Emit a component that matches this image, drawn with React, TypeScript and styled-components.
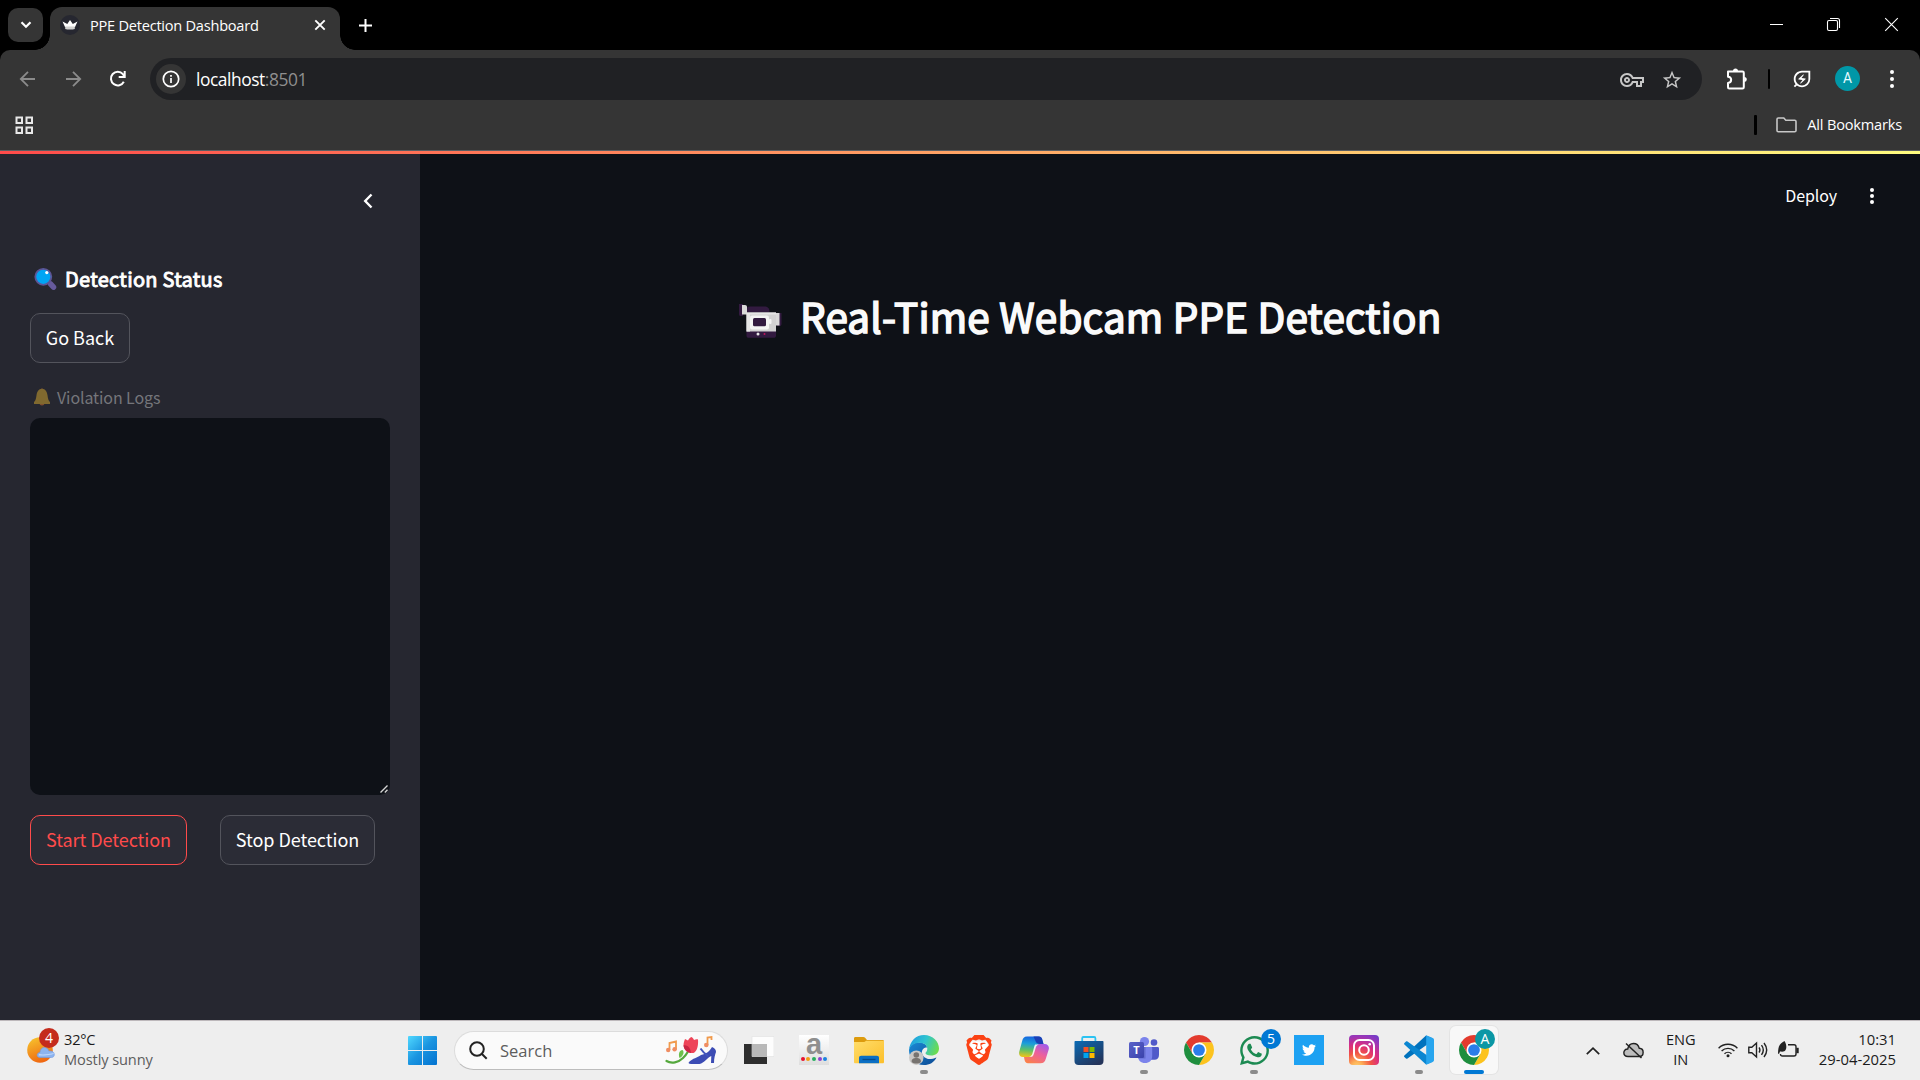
import React from "react";
import styled, { createGlobalStyle } from "styled-components";
import { MdOutlineVpnKey, MdOutlineStarBorder, MdOutlineEnergySavingsLeaf } from "react-icons/md";
import { FaTwitter, FaWhatsapp } from "react-icons/fa";
import { SiBrave } from "react-icons/si";

const segoe = `"Open Sans", "Noto Sans", sans-serif`;
const source = `"Noto Sans CJK SC", "Noto Sans", sans-serif`;

const GlobalStyle = createGlobalStyle`
  * { box-sizing: border-box; }
  html, body { margin: 0; background: #0e1117; overflow: hidden; }
  svg { display: block; flex: none; }
`;

const Desktop = styled.div`
  width: 1920px;
  height: 1080px;
  display: flex;
  flex-direction: column;
  overflow: hidden;
  font-family: ${segoe};
`;

const Label = styled.span<{ $size: number; $track?: number; $color?: string; $stroke?: number; $line?: number }>`
  font-size: ${p => p.$size}px;
  letter-spacing: ${p => p.$track ?? 0}px;
  color: ${p => p.$color ?? "#fff"};
  font-weight: 400;
  -webkit-text-stroke: ${p => p.$stroke ?? 0}px currentColor;
  line-height: ${p => p.$line ?? 20}px;
  white-space: nowrap;
`;

/* ---------- browser chrome ---------- */

const TabStrip = styled.header`
  height: 50px;
  background: #000;
  display: flex;
  padding: 7px 0 0 8px;
`;

const TabSearch = styled.button`
  width: 35px;
  height: 34px;
  margin: 1px 7px 0 0;
  padding: 0;
  border: 0;
  border-radius: 10px;
  background: #353535;
  display: grid;
  place-items: center;
`;

const Tab = styled.div`
  position: relative;
  width: 290px;
  height: 43px;
  border-radius: 12px 12px 0 0;
  background: #353535;
  display: flex;
  align-items: center;
  padding: 0 13px 7px 10px;
  &::before, &::after {
    content: "";
    position: absolute;
    bottom: 0;
    width: 15px;
    height: 15px;
  }
  &::before { left: -15px; background: radial-gradient(circle at 0 0, transparent 14.5px, #353535 15px); }
  &::after { right: -15px; background: radial-gradient(circle at 100% 0, transparent 14.5px, #353535 15px); }
`;

const TabTitle = styled.div`
  flex: 1;
  padding-left: 10px;
  display: flex;
`;

const NewTab = styled.div`
  margin: 11px 0 0 18px;
`;

const WindowControls = styled.div`
  margin-left: auto;
  padding: 10px 21px 0 0;
  display: flex;
  gap: 43px;
`;

const ToolbarBack = styled.div`
  background: #000;
`;

const Toolbar = styled.div`
  height: 56px;
  padding: 8px 0 0 18px;
  background: #353535;
  border-radius: 10px 10px 0 0;
  display: flex;
  align-items: flex-start;
`;

const NavButtons = styled.div`
  width: 132px;
  height: 42px;
  display: flex;
  align-items: center;
  gap: 25px;
`;

const Omnibox = styled.div`
  width: 1552px;
  height: 42px;
  border-radius: 21px;
  background: #202124;
  display: flex;
  align-items: center;
  padding: 0 19px 0 6px;
`;

const SiteInfo = styled.div`
  width: 30px;
  height: 30px;
  border-radius: 50%;
  background: #353535;
  display: grid;
  place-items: center;
  margin-right: 10px;
`;

const Spacer = styled.div`
  flex: 1;
`;

const OmniActions = styled.div`
  display: flex;
  align-items: center;
  gap: 17px;
  padding-top: 1px;
  color: #c7c7c7;
`;

const Extensions = styled.div`
  height: 41px;
  flex: 1;
  display: flex;
  align-items: center;
  padding-left: 24px;
  color: #fff;
`;

const Divider = styled.div<{ $width: number; $left: number; $right: number }>`
  width: ${p => p.$width}px;
  height: 20px;
  background: #000;
  border-radius: 1px;
  margin: 0 ${p => p.$right}px 0 ${p => p.$left}px;
`;

const Avatar = styled.div<{ $size: number }>`
  width: ${p => p.$size}px;
  height: ${p => p.$size}px;
  border-radius: 50%;
  background: #0097a7;
  color: #e6fbff;
  font: 400 ${p => p.$size * 0.55}px/1 Roboto, sans-serif;
  display: grid;
  place-items: center;
`;

const Bookmarks = styled.div`
  height: 45px;
  padding: 0 18px 6px 15px;
  background: #353535;
  border-bottom: 1px solid #5c5f63;
  display: flex;
  align-items: center;
`;

const BookmarkLabel = styled.div`
  display: flex;
  padding: 0 0 2px 10px;
`;

/* ---------- dashboard page ---------- */

const Rainbow = styled.div`
  height: 3px;
  background: linear-gradient(90deg, rgb(255, 75, 75), rgb(255, 253, 128));
`;

const Page = styled.div`
  height: 866px;
  display: flex;
  font-family: ${source};
`;

const Sidebar = styled.aside`
  width: 420px;
  background: #262730;
  padding: 37px 30px 0;
`;

const Collapse = styled.div`
  display: flex;
  justify-content: flex-end;
  padding-right: 12px;
  height: 73px;
`;

const Heading = styled.h3`
  margin: 0;
  height: 30px;
  padding-left: 4px;
  display: flex;
  align-items: center;
  gap: 8px;
`;

const Button = styled.button<{ $width: number; $hot?: boolean }>`
  width: ${p => p.$width}px;
  height: 50px;
  padding: 0 0 3px;
  border: 1px solid ${p => (p.$hot ? "#ff4b4b" : "#53545c")};
  border-radius: 10px;
  background: #2b2c36;
  font-family: inherit;
  display: flex;
  align-items: center;
  justify-content: center;
`;

const BackRow = styled.div`
  padding-top: 19px;
`;

const LogLabel = styled.label`
  height: 55px;
  padding: 13px 0 0 4px;
  display: flex;
  align-items: center;
  gap: 7px;
`;

const LogBox = styled.div`
  height: 377px;
  border-radius: 10px;
  background: #0e1117;
  display: flex;
  align-items: flex-end;
  justify-content: flex-end;
  padding: 0 2px 2px 0;
`;

const Actions = styled.div`
  display: flex;
  gap: 33px;
  padding-top: 20px;
`;

const Main = styled.main`
  flex: 1;
  background: #0e1117;
`;

const AppHeader = styled.div`
  height: 83px;
  padding: 0 45px 0 0;
  display: flex;
  align-items: center;
  justify-content: flex-end;
  gap: 32px;
`;

const Deploy = styled.div`
  display: flex;
  padding-bottom: 2px;
`;

const Title = styled.h1`
  margin: 0;
  padding: 50px 0 0 318px;
  display: flex;
  align-items: center;
  gap: 18px;
`;

const CameraSlot = styled.span`
  padding-top: 10px;
`;

/* ---------- taskbar ---------- */

const Taskbar = styled.footer`
  height: 60px;
  background: #eee;
  border-top: 1px solid #bdb8bb;
  display: flex;
  padding-left: 27px;
`;

const Weather = styled.div`
  width: 381px;
  display: flex;
  padding-top: 8px;
  gap: 8px;
`;

const WeatherIcon = styled.div`
  position: relative;
  width: 29px;
  padding-top: 8px;
`;

const Lines = styled.div<{ $align?: string }>`
  display: flex;
  flex-direction: column;
  align-items: ${p => p.$align ?? "flex-start"};
`;

const Badge = styled.div<{ $bg: string; $top: number; $right: number }>`
  position: absolute;
  top: ${p => p.$top}px;
  right: ${p => p.$right}px;
  width: 20px;
  height: 20px;
  border-radius: 50%;
  background: ${p => p.$bg};
  color: #fff;
  font-size: 14px;
  line-height: 20px;
  text-align: center;
`;

const StartRow = styled.div`
  display: flex;
  align-items: center;
  height: 58px;
`;

const SearchBox = styled.div`
  width: 274px;
  height: 39px;
  margin: 0 7px 0 17px;
  padding: 1px 10px 0 14px;
  border: 1px solid #dcdcdc;
  border-bottom-color: #bdbdbd;
  border-radius: 20px;
  background: #fafafa;
  display: flex;
  align-items: center;
  gap: 12px;
`;

const App48 = styled.div<{ $active?: boolean }>`
  position: relative;
  width: 48px;
  height: 48px;
  margin-right: 7px;
  border-radius: 6px;
  background: ${p => (p.$active ? "#f8f8f8" : "transparent")};
  box-shadow: ${p => (p.$active ? "0 0 0 1px #e4e4e4" : "none")};
  display: grid;
  place-items: center;
`;

const Running = styled.i<{ $active?: boolean }>`
  position: absolute;
  bottom: 0;
  left: ${p => (p.$active ? 14 : 20)}px;
  width: ${p => (p.$active ? 20 : 8)}px;
  height: 4px;
  border-radius: 2px;
  background: ${p => (p.$active ? "#0078d4" : "#8a8a8a")};
`;

const AmazonTile = styled.div`
  width: 30px;
  height: 30px;
  background: linear-gradient(#fff, #dedede);
  display: flex;
  flex-direction: column;
  align-items: center;
`;

const AmazonLetter = styled.span`
  height: 22px;
  font: 700 29px/19px "Liberation Sans", Arial, sans-serif;
  color: #8f8f8f;
`;

const Dots = styled.div`
  display: flex;
  gap: 1.6px;
`;

const Dot = styled.i<{ $c: string }>`
  width: 4px;
  height: 4px;
  border-radius: 50%;
  background: ${p => p.$c};
`;

const Tray = styled.div`
  margin-left: auto;
  display: flex;
  align-items: center;
  height: 56px;
  padding-right: 24px;
`;

const TraySlot = styled.div`
  padding-top: 3px;
`;

const Language = styled.div`
  width: 28px;
  margin: 0 23px 0 23px;
`;

const TrayIcons = styled.div`
  display: flex;
  align-items: center;
  gap: 10px;
  margin-right: 20px;
  padding-top: 2px;
`;

const Kebab = ({ r = 2, gap = 7, color = "#fff" }: { r?: number; gap?: number; color?: string }) => (
  <svg width={6} height={20} viewBox="0 0 6 20" fill={color}>
    {[-1, 0, 1].map(i => <circle key={i} cx={3} cy={10 + i * gap} r={r} />)}
  </svg>
);

const Arrow = ({ flip }: { flip?: boolean }) => (
  <svg width={20} height={20} viewBox="0 0 20 20" fill="none" stroke="#8b8b8b" strokeWidth={1.8} transform={flip ? "scale(-1 1)" : undefined}>
    <path d="M17 10H3.5M10 2.8 2.8 10l7.2 7.2" />
  </svg>
);

const Puzzle = () => (
  <svg width={22} height={22} viewBox="0 0 22 22" fill="none" stroke="#fff" strokeWidth={2} strokeLinejoin="round">
    <path d="M2 3.500h14.500c.8 0 1.300.5 1.300 1.300v14.400c0 .8-.5 1.300-1.300 1.300H3.300c-.8 0-1.300-.5-1.300-1.300V15c4.200-.300 4.200-6 0-6.300Z" />
    <path fill="#fff" stroke="none" d="M7 3a2.500 2.500 0 0 1 5 0ZM18.300 9a2.500 2.500 0 0 1 0 5Z" />
  </svg>
);

const Chrome = () => (
  <svg width={30} height={30} viewBox="-22 -22 44 44">
    <path fill="#e33b2e" d="M-19.05-11A22 22 0 0 1 19.05-11L0-11L-9.53 5.5Z" />
    <path fill="#fcc31e" transform="rotate(120)" d="M-19.05-11A22 22 0 0 1 19.05-11L0-11L-9.53 5.5Z" />
    <path fill="#1e8e3e" transform="rotate(240)" d="M-19.05-11A22 22 0 0 1 19.05-11L0-11L-9.53 5.5Z" />
    <circle r={11} fill="#fff" />
    <circle r={8.6} fill="#2b7de9" />
  </svg>
);

const Edge = () => (
  <svg width={30} height={30} viewBox="0 0 30 30">
    <defs>
      <linearGradient id="edgeTop" x1="0" y1="0.3" x2="1" y2="0.6">
        <stop offset="0" stopColor="#1f9de0" /><stop offset="0.5" stopColor="#2fc4cf" /><stop offset="1" stopColor="#6ddc4d" />
      </linearGradient>
      <linearGradient id="edgeBottom" x1="0" y1="0" x2="1" y2="1">
        <stop offset="0" stopColor="#1b8ad6" /><stop offset="1" stopColor="#0c4a94" />
      </linearGradient>
    </defs>
    <path fill="url(#edgeBottom)" d="M0 15C1 9 6 7 11 7.500c5 .5 7 3 7 5-3 0-5.500 2-5 5.500.5 4 5 6.500 9 6 3-.3 4.500-1.500 5.500-1.500-2.500 5-7 7.500-12.500 7.500C6 30 0 23 0 15Z" />
    <path fill="url(#edgeTop)" d="M0 14.500C1 6 7 0 15 0c9 0 15 6.500 15 13.500 0 4.500-3.500 7-8 7-3.500 0-5.500-1-5.500-2.200 0-1 1.800-1.500 1.800-4.800 0-3-3-5.800-8-5.800-5 0-9 3-10.300 6.800Z" />
    <circle cx={7.300} cy={22.700} r={7.200} fill="#c9c7c5" />
    <circle cx={7.300} cy={20} r={2.800} fill="#77736f" />
    <path fill="#77736f" d="M2.700 27c-.3-3 1.500-4 4.600-4s4.900 1 4.600 4c-2 2-7 2-9.200 0Z" />
  </svg>
);

const Copilot = () => (
  <svg width={30} height={28} viewBox="0 0 30 28">
    <defs>
      <linearGradient id="copA" x1="0.4" y1="0" x2="0.3" y2="1">
        <stop offset="0" stopColor="#1565e0" /><stop offset="0.35" stopColor="#1c9fd8" /><stop offset="0.65" stopColor="#5bc06b" /><stop offset="1" stopColor="#f0c419" />
      </linearGradient>
      <linearGradient id="copB" x1="0.8" y1="0" x2="0.2" y2="1">
        <stop offset="0" stopColor="#a15bea" /><stop offset="0.45" stopColor="#ec5f9d" /><stop offset="1" stopColor="#fb8148" />
      </linearGradient>
    </defs>
    <path fill="url(#copB)" d="M20 8h5.500c3.500 0 5 2.500 4.200 5.500l-2.800 9c-1 3.500-2.500 4.800-5.500 4.800H9c-2 0-3-1.500-3.500-3.500L5 21h3.500c2.500 0 4-1.500 4.800-4l1.900-6c.8-2.200 2.300-3 4.800-3Z" />
    <path fill="url(#copA)" d="M8 .5h11.500c2.500 0 3.500 1.500 4 4L24.500 8H21c-2.500 0-4 1.200-4.800 3.500l-1.900 6C13.500 20 12.300 21 9.800 21H4C.8 21-.5 18.500.3 15.500l2.800-10.300C4 2 5 .5 8 .5Z" />
    <path fill="#1a3fb5" d="M14.500.5h5c2.500 0 3.500 1.500 4 4L24.500 8H21c-2.200 0-4-1-4.500-3Z" />
    <path fill="#fff" opacity=".85" d="M16.200 8.500h3.600c-1.700.6-2.500 1.500-3 3l-1.800 6c-.5 1.500-1 2.500-1.800 3.200h-3c1.800-.5 2.600-1.500 3.200-3.200l1.600-6c.3-1.200.6-2.200 1.200-3Z" />
  </svg>
);

const Store = () => (
  <svg width={30} height={30} viewBox="0 0 30 30">
    <defs><linearGradient id="store" x1="0" y1="0" x2="0.7" y2="1"><stop offset="0" stopColor="#0a6bb5" /><stop offset="1" stopColor="#24345a" /></linearGradient></defs>
    <path fill="none" stroke="#2cc3f2" strokeWidth={1.800} d="M8.200 7V3.200c0-.8.4-1.200 1.200-1.200h10.800c.8 0 1.200.4 1.200 1.200V7" />
    <path fill="url(#store)" d="M.5 7c0-.7.300-1 1-1h27c.7 0 1 .3 1 1v19c0 2.500-1.500 4-4 4h-21c-2.500 0-4-1.500-4-4Z" />
    <path fill="#f25022" d="M9.500 12h5v5h-5z" /><path fill="#7fba00" d="M15.500 12h5v5h-5z" />
    <path fill="#00a4ef" d="M9.500 18h5v5h-5z" /><path fill="#ffb900" d="M15.500 18h5v5h-5z" />
  </svg>
);

const TeamsWrap = styled.div`
  position: relative;
  width: 30px;
  height: 30px;
`;
const TeamsLetter = styled.span`
  position: absolute;
  left: 0;
  top: 7px;
  width: 15px;
  height: 16px;
  border-radius: 1.5px;
  background: linear-gradient(135deg, #5a62c9, #3b42ab);
  color: #fff;
  font: 700 11px/16px ${segoe};
  text-align: center;
`;

const Teams = () => (
  <TeamsWrap>
    <svg width={30} height={30} viewBox="0 0 30 30">
      <circle cx={25} cy={7.500} r={3.300} fill="#5059c9" />
      <path fill="#5059c9" d="M21 12h7.500c1 0 1.500.6 1.500 1.500V20c0 3-1.800 4.800-4.500 4.800H21Z" />
      <circle cx={15.500} cy={6.500} r={4.600} fill="#7b83eb" />
      <path fill="#7b83eb" d="M9 12h13c.8 0 1.200.5 1.200 1.200V21c0 4.500-3 7-7.200 7s-7-2.500-7-7Z" />
      <path fill="#4a50ad" opacity=".45" d="M9 12h7.500v11.500H9Z" />
    </svg>
    <TeamsLetter>T</TeamsLetter>
  </TeamsWrap>
);

const Brave = () => (
  <svg width={30} height={30} viewBox="0 0 30 30">
    <path fill="#fff" d="M7.500 6.500h15l2 6-3.500 11-6 4.500-6-4.500-3.500-11Z" />
    <SiBrave size={30} color="#fb4214" />
  </svg>
);

const VsCode = () => (
  <svg width={30} height={30} viewBox="0 0 30 30">
    <path fill="#0072bd" d="M22 .5 28.500 3.200 22.500 10 3.500 23.500c-.6.400-1 .4-1.500 0L.4 22c-.5-.5-.5-1.200 0-1.600Z" />
    <path fill="#0b86d1" d="M22 29.500 28.500 26.800 22.500 20 3.500 6.500c-.6-.400-1-.4-1.500 0L.4 8c-.5.5-.5 1.200 0 1.600Z" />
    <path fill="#27a5ee" d="m22.200.2 6.500 2.900c.8.4 1.300 1 1.300 1.900v20c0 .9-.5 1.500-1.300 1.900l-6.500 2.900V.2Z" />
  </svg>
);

const Instagram = () => (
  <svg width={30} height={30} viewBox="0 0 30 30">
    <defs>
      <radialGradient id="ig" cx="0.27" cy="1.07" r="1.25">
        <stop offset="0" stopColor="#fed373" /><stop offset="0.15" stopColor="#fdb056" /><stop offset="0.38" stopColor="#f15245" /><stop offset="0.6" stopColor="#d92e7f" /><stop offset="0.82" stopColor="#9b36b7" /><stop offset="1" stopColor="#6d3cc9" />
      </radialGradient>
    </defs>
    <rect width={30} height={30} rx={4} fill="url(#ig)" />
    <g fill="none" stroke="#fff" strokeWidth={2}>
      <rect x={5} y={5} width={20} height={20} rx={5.500} /><circle cx={15} cy={15} r={4.800} />
    </g>
    <circle cx={20.700} cy={9.300} r={1.300} fill="#fff" />
  </svg>
);

const Folder = () => (
  <svg width={30} height={28} viewBox="0 0 30 28">
    <defs><linearGradient id="fold" x1="0" y1="0" x2="1" y2="1"><stop offset="0" stopColor="#ffdd6b" /><stop offset="1" stopColor="#fcbf2a" /></linearGradient></defs>
    <path fill="#dd9b0d" d="M0 2.500C0 1.500.5 1 1.500 1h7.800c.8 0 1.300.2 1.800.8L13 4h15.500c1 0 1.500.5 1.500 1.500V10H0Z" />
    <path fill="url(#fold)" d="M0 6h9.500c1 0 1.500-.3 2.200-1l.3-.300H30V26c0 .9-.5 1.300-1.300 1.300H1.300C.5 27.300 0 26.900 0 26Z" />
    <path fill="#0c6fc4" d="M5 27.300V22c0-1.400.8-2.200 2.200-2.200h15.600c1.400 0 2.200.8 2.200 2.200v5.300Z" />
    <path stroke="#064a8c" strokeWidth={1.300} d="M8.500 23.500h13" />
  </svg>
);

const SearchArt = () => (
  <svg width={52} height={30} viewBox="0 0 52 30">
    <path fill="none" stroke="#55a83d" strokeWidth={2.200} strokeLinecap="round" d="M1.500 25c5 3 12 1.500 16.500-3s5-7 6-8" />
    <path fill="#6cc04a" d="M14.500 22c-1.500-4 0-8 3-8 2 2 1 6-3 8Z" />
    <path fill="#ee4458" d="M18.500 9.500c0-3 1-5 1.500-6.500l3 1.500c1-2 2-3 3.500-3.500 1 .7 2 1.500 2.500 3 1.500-.7 3-.8 4-.500.500 6-1 12-4.500 13.500-4.500.500-9-2-10-7.500Z" />
    <path fill="#c92643" d="M18.500 9.500c4.500-1 7 3 7.500 7.500-4-.5-7-3-7.500-7.500Z" />
    <g fill="none" stroke="#f09a4c" strokeWidth={1.800}><path d="M4.500 14V7l6.500-1.500v8M42.500 9V1.500L46.500 1v3" /></g>
    <g fill="#ef8d62"><circle cx={3.200} cy={14} r={2.200} /><circle cx={9.600} cy={13.200} r={2.200} /><circle cx={41.300} cy={9} r={2.300} /></g>
    <path fill="#3c4cb4" d="M24 26c4-4 8-4 12-7 5-1 8-3 11-8 3 1 4 3 4 5-1 3-2 6-2 11h-3l.3-7c-4 1.500-7 7-11.800 8H26c-2 0-3-1-2-2Z" />
    <path fill="none" stroke="#4155bd" strokeWidth={2} d="M35.500 12.500c2 3 4 5 7.500 7.500" />
  </svg>
);

const TaskView = () => (
  <svg width={30} height={30} viewBox="0 0 30 30">
    <path fill="#2e2e2e" d="M0 9h23v20H0z" />
    <path fill="#fdfdfd" stroke="#e1e1e1" strokeWidth={0.600} d="M8 1.500h22v20H8z" />
    <path fill="#b9b9b9" d="M8 9h15v12.500H8z" />
  </svg>
);

const WeatherArt = () => (
  <svg width={29} height={28} viewBox="0 0 29 28">
    <defs><linearGradient id="sun" x1="0.2" y1="0" x2="0.6" y2="1"><stop offset="0" stopColor="#f6c22d" /><stop offset="1" stopColor="#ef6410" /></linearGradient></defs>
    <circle cx={13} cy={13} r={12.800} fill="url(#sun)" />
    <path fill="#8db4ef" stroke="#6f9be4" strokeWidth={0.600} d="M13 20.500c-4 0-3.500-5 0-5 0-3 2-5 4.500-5 2 0 3.800 1.400 4.200 3.500 7-.8 7 6.500 2.800 6.500Z" />
    <path fill="#c0d7fb" d="M12 17c4 1 10 0 15-1 .5 1.500-8 3-15 2.500Z" />
  </svg>
);

const Magnifier = () => (
  <svg width={23} height={24} viewBox="0 0 23 24">
    <path stroke="#665a9c" strokeWidth={5.500} strokeLinecap="round" d="m16.500 16.800 3 3.300" />
    <circle cx={9.300} cy={9.800} r={8} fill="#00a5f4" stroke="#5d5597" strokeWidth={1.800} />
    <circle cx={12.800} cy={5.600} r={1.600} fill="#fff" />
  </svg>
);

const Bell = () => (
  <svg width={16} height={18} viewBox="0 0 16 18">
    <path fill="#7f4f2e" d="M5.500 15h5c0 1.700-1 2.500-2.500 2.500S5.500 16.700 5.500 15ZM8 0l1.500 2h-3Z" />
    <path fill="#80692f" d="M8 .800c3.500 0 5 3 5.500 6.500.4 3.500 1 5.500 2.500 6.700V16H0v-2c1.500-1.200 2.100-3.200 2.500-6.700C3 3.800 4.500.800 8 .800Z" />
  </svg>
);

const Camera = () => (
  <svg width={44} height={36} viewBox="0 0 44 36">
    <path fill="#321a40" d="M1 1h4v12H2.500C1 13 1 12 1 10.500ZM9 8V6c0-1.600.8-2.400 2.500-2.400H26c4 0 5.500 2 5.500 5v1H9ZM39 10h4.500v11c0 1.500-1 2-2 2H39ZM8.500 28H38v4.500c0 1.600-.8 2.300-2.300 2.300H11c-1.700 0-2.500-.8-2.500-2.300Z" />
    <path fill="#d9d9d9" d="M4 2h3c1.200 0 2 .7 2 2v7.500H4ZM38 10h3.500v12.500H38Z" />
    <path fill="#d2d2d2" d="M8.500 9.500H38V28.500H8.500Z" />
    <path fill="#e6e6e6" d="M8.500 9.500H38v2H12V28.500H8.500Z" />
    <rect x={12} y={12.500} width={19} height={14} rx={2} fill="#f4f4f4" />
    <rect x={31} y={16} width={2.500} height={5} rx={1} fill="#f4f4f4" />
    <rect x={15} y={15} width={13} height={8.300} rx={1.500} fill="#321a40" />
    <circle cx={20} cy={31} r={1.500} fill="#e6e6e6" />
    <circle cx={26.500} cy={31} r={1} fill="#c3145a" />
  </svg>
);

const line = { fill: "none", stroke: "#222", strokeWidth: 1.4 } as const;

export default function App() {
  return (
    <Desktop>
      <GlobalStyle />
      <TabStrip>
        <TabSearch>
          <svg width={12} height={8} viewBox="0 0 12 8" fill="none" stroke="#fff" strokeWidth={2.2}><path d="m1.500 1.200 4.500 4.500 4.500-4.500" /></svg>
        </TabSearch>
        <Tab>
          <svg width={20} height={20} viewBox="0 0 20 20">
            <circle cx={10} cy={10} r={10} fill="#262730" />
            <path fill="#fff" d="M2.500 6.500 7.300 9 10 5l2.800 4 4.700-2.500L15 12H5Z" />
            <path fill="#d0d0d0" d="M5.200 11.500h9.600V14c-2 .8-7.600.8-9.600 0Z" />
          </svg>
          <TabTitle><Label $size={14.6} $track={-0.25}>PPE Detection Dashboard</Label></TabTitle>
          <svg width={14} height={14} viewBox="0 0 14 14" stroke="#fff" strokeWidth={1.900}><path d="m2.300 2.300 9.400 9.400M11.700 2.300l-9.400 9.400" /></svg>
        </Tab>
        <NewTab><svg width={15} height={15} viewBox="0 0 15 15" stroke="#fff" strokeWidth={2}><path d="M7.500 1v13M1 7.500h13" /></svg></NewTab>
        <WindowControls>
          <svg width={15} height={15} viewBox="-1 0 15 15" stroke="#fff"><path d="M1 7.500h13" /></svg>
          <svg width={15} height={15} viewBox="0 0 15 15" fill="none" stroke="#fff" strokeWidth={1.100}>
            <rect x={1.500} y={3.500} width={10} height={10} rx={1.500} /><path d="M4 1.500h7.500a2 2 0 0 1 2 2V11" />
          </svg>
          <svg width={15} height={15} viewBox="0 0 15 15" stroke="#fff" strokeWidth={1.100}><path d="m1.200 1.200 12.600 12.600M13.800 1.200 1.200 13.800" /></svg>
        </WindowControls>
      </TabStrip>

      <ToolbarBack>
        <Toolbar>
          <NavButtons>
            <Arrow />
            <Arrow flip />
            <svg width={20} height={20} viewBox="0.5 0.5 20 20" fill="none" stroke="#fff" strokeWidth={2}>
              <path d="M16.300 13.200A6.800 6.800 0 1 1 15.400 5.600L17 8" /><path d="M17.200 2.500v6h-6" />
            </svg>
          </NavButtons>
          <Omnibox>
            <SiteInfo>
              <svg width={18} height={18} viewBox="0 0 18 18" fill="none" stroke="#fff" strokeWidth={1.700}><circle cx={9} cy={9} r={7.700} /><path d="M9 8v5M9 5v1.800" /></svg>
            </SiteInfo>
            <Label $size={17.4} $track={-0.45}>localhost</Label>
            <Label $size={17.4} $track={-0.45} $color="#8f8f8f">:8501</Label>
            <Spacer />
            <OmniActions><MdOutlineVpnKey size={24} /><MdOutlineStarBorder size={22} /></OmniActions>
          </Omnibox>
          <Extensions>
            <Puzzle />
            <Divider $width={2} $left={20} $right={21} />
            <MdOutlineEnergySavingsLeaf size={22} />
            <Divider $width={0} $left={11} $right={11} />
            <Avatar $size={25}>A</Avatar>
            <Divider $width={0} $left={15} $right={14} />
            <Kebab gap={7} />
          </Extensions>
        </Toolbar>
      </ToolbarBack>
      <Bookmarks>
        <svg width={19} height={19} viewBox="0 0 19 19" fill="none" stroke="#e8e8e8" strokeWidth={2}>
          <path d="M1.500 1.500h5.500v5.500H1.500zM11.500 1.500H17v5.500h-5.500zM1.500 11.500H7V17H1.500zM11.500 11.500H17V17h-5.500z" />
        </svg>
        <Spacer />
        <Divider $width={3} $left={0} $right={19} />
        <svg width={21} height={16} viewBox="0 0 21 16" fill="none" stroke="#c7c7c7" strokeWidth={1.600}><path d="M2.300 1h5.500l2 2.200h8.900c.8 0 1.300.5 1.300 1.300v9c0 .8-.5 1.300-1.300 1.300H2.300c-.8 0-1.300-.5-1.300-1.300V2.300C1 1.500 1.500 1 2.300 1Z" /></svg>
        <BookmarkLabel><Label $size={14.6} $track={-0.2}>All Bookmarks</Label></BookmarkLabel>
      </Bookmarks>

      <Rainbow />
      <Page>
        <Sidebar>
          <Collapse>
            <svg width={20} height={20} viewBox="0 0 20 20" fill="none" stroke="#fff" strokeWidth={2.400}><path d="m13.500 3.500-6.300 6.500 6.300 6.500" /></svg>
          </Collapse>
          <Heading><Magnifier /><Label $size={20} $track={0.28} $stroke={0.9} $line={30}>Detection Status</Label></Heading>
          <BackRow><Button $width={100}><Label $size={18}>Go Back</Label></Button></BackRow>
          <LogLabel><Bell /><Label $size={16} $track={-0.1} $color="#75767b">Violation Logs</Label></LogLabel>
          <LogBox>
            <svg width={8} height={8} viewBox="0 0 8 8" stroke="#d5d5d5" strokeWidth={1.400}><path d="m.5 7.500 7-7M4.800 7.500l2.700-2.700" /></svg>
          </LogBox>
          <Actions>
            <Button $width={157} $hot><Label $size={18} $track={-0.05} $color="#ff4b4b">Start Detection</Label></Button>
            <Button $width={155}><Label $size={18} $track={-0.05}>Stop Detection</Label></Button>
          </Actions>
        </Sidebar>
        <Main>
          <AppHeader><Deploy><Label $size={16} $track={-0.1}>Deploy</Label></Deploy><Kebab r={2} gap={6} /></AppHeader>
          <Title><CameraSlot><Camera /></CameraSlot><Label $size={40.4} $track={0.2} $stroke={1.6} $line={58} $color="#fafafa">Real-Time Webcam PPE Detection</Label></Title>
        </Main>
      </Page>

      <Taskbar>
        <Weather>
          <WeatherIcon><WeatherArt /><Badge $bg="#c42b1c" $top={-1} $right={-3}>4</Badge></WeatherIcon>
          <Lines>
            <Label $size={14.6} $track={-0.2} $color="#1b1b1b">32°C</Label>
            <Label $size={14.6} $track={-0.1} $color="#5d5d5d">Mostly sunny</Label>
          </Lines>
        </Weather>
        <StartRow>
          <svg width={29} height={29} viewBox="0 0 29 29">
            <defs><linearGradient id="win" gradientUnits="userSpaceOnUse" x1="0" y1="0" x2="29" y2="29"><stop offset="0" stopColor="#50d8ff" /><stop offset="0.5" stopColor="#1a94e0" /><stop offset="1" stopColor="#0272d0" /></linearGradient></defs>
            <path fill="url(#win)" d="M0 1a1 1 0 0 1 1-1h13v14H0zM15 0h13a1 1 0 0 1 1 1v13H15zM0 15h14v14H1a1 1 0 0 1-1-1zM15 15h14v13a1 1 0 0 1-1 1H15z" />
          </svg>
          <SearchBox>
            <svg width={19} height={19} viewBox="0 0 19 19" fill="none" stroke="#222" strokeWidth={2}><circle cx={8} cy={8} r={6.800} /><path d="m12.700 12.700 5 5" /></svg>
            <Label $size={16.5} $color="#5d5d5d">Search</Label>
            <Spacer />
            <SearchArt />
          </SearchBox>
          <App48><TaskView /></App48>
          <App48>
            <AmazonTile>
              <AmazonLetter>a</AmazonLetter>
              <Dots>{["#e8112d", "#f39c12", "#27ae60", "#8e3fd0", "#1b84e0"].map(c => <Dot key={c} $c={c} />)}</Dots>
            </AmazonTile>
          </App48>
          <App48><Folder /></App48>
          <App48><Edge /><Running /></App48>
          <App48><Brave /></App48>
          <App48><Copilot /></App48>
          <App48><Store /></App48>
          <App48><Teams /><Running /></App48>
          <App48><Chrome /></App48>
          <App48><FaWhatsapp size={33} color="#1c8a52" /><Badge $bg="#0078d4" $top={3} $right={-3}>5</Badge><Running /></App48>
          <App48>
            <svg width={30} height={30} viewBox="0 0 30 30"><rect width={30} height={30} fill="#1da1f2" /><FaTwitter x={8} y={8} size={14} color="#fff" /></svg>
          </App48>
          <App48><Instagram /></App48>
          <App48><VsCode /><Running /></App48>
          <App48 $active><Chrome /><Badge $bg="#0b97a5" $top={3} $right={3}>A</Badge><Running $active /></App48>
        </StartRow>
        <Tray>
          <TraySlot><svg width={14} height={8} viewBox="0 0 14 8" fill="none" stroke="#222" strokeWidth={1.700}><path d="m.8 7.200 6.200-6 6.200 6" /></svg></TraySlot>
          <Divider $width={0} $left={11} $right={12} />
          <TraySlot>
            <svg width={21} height={17} viewBox="0 0 21 17">
              <path fill="#bdbdbd" stroke="#222" strokeWidth={1.400} d="M5 14.500c-5.500 0-5.500-7.500-.3-7.500C5.500 3 8 1.500 10.500 1.500c3 0 5 1.700 5.800 4.800 5.200.3 5 8.200 0 8.200Z" />
              <path stroke="#222" strokeWidth={1.500} d="m3 1.500 15.500 14.500" />
            </svg>
          </TraySlot>
          <Language><Lines $align="center"><Label $size={14.6} $color="#1b1b1b">ENG</Label><Label $size={14.6} $color="#1b1b1b">IN</Label></Lines></Language>
          <TrayIcons>
            <svg width={20} height={16} viewBox="0 0 20 16" {...line}>
              <path d="M.6 6.200a13.300 13.300 0 0 1 18.800 0M3.600 9a9 9 0 0 1 12.800 0M6.500 11.800a5 5 0 0 1 7 0" /><circle cx={10} cy={13.800} r={1.500} fill="#222" stroke="none" />
            </svg>
            <svg width={20} height={18} viewBox="0 0 20 18" {...line}>
              <path d="M.8 6.300h3L8.500 2v14l-4.700-4.300h-3ZM11 6.500q1.800 2.500 0 5M13.500 4.200q3.600 4.800 0 9.600M16 2q5.400 7 0 14" />
            </svg>
            <svg width={21} height={18} viewBox="0 0 21 18" {...line}>
              <path d="M10 3.800h6c1.400 0 2 .7 2 2v7.200c0 1.400-.6 2-2 2H4.500c-1.400 0-2-.6-2-2" /><path fill="#222" d="M19 7.500h1v4h-1z" />
              <path fill="#222" stroke="none" d="M0 12.500C.3 6.500 .5 3 6.500 0 9 4 8.800 8.500 6.800 10c-2 1-3.800.5-4.800.5L1 13Z" />
            </svg>
          </TrayIcons>
          <Lines $align="flex-end"><Label $size={14.8} $track={0} $color="#1b1b1b">10:31</Label><Label $size={14.8} $track={0} $color="#1b1b1b">29-04-2025</Label></Lines>
        </Tray>
      </Taskbar>
    </Desktop>
  );
}
